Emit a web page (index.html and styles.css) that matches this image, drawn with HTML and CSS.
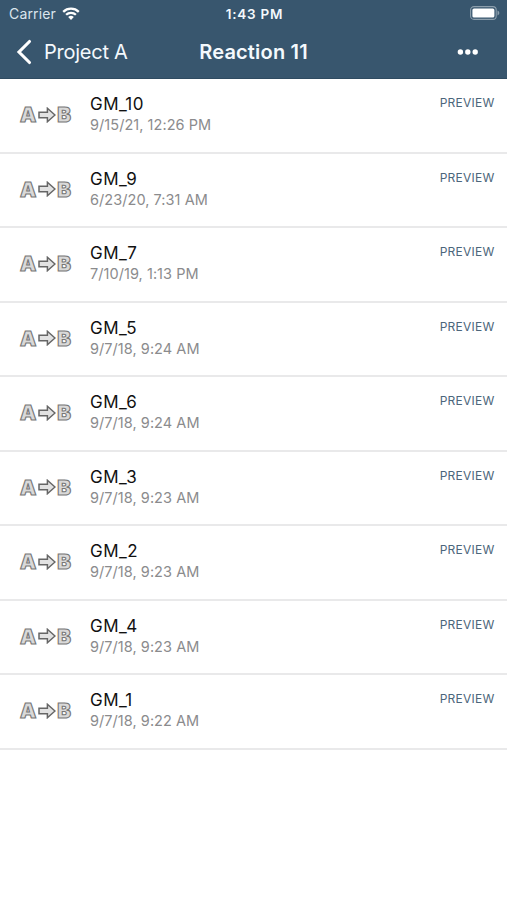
FILE: index.html
```html
<!DOCTYPE html>
<html lang="en">
<head>
<meta charset="utf-8">
<title>Reaction 11</title>
<link rel="stylesheet" href="styles.css">
</head>
<body>
<header class="header">
  <div class="status">
    <div class="carrier">
      <span>Carrier</span>
      <svg class="wifi" viewBox="0 0 18 13">
        <path d="M1.2 4.8a11.2 11.2 0 0 1 15.6 0M4.1 7.8a7 7 0 0 1 9.8 0"/>
        <path class="wifi-dot" d="M9 12.9 6.2 10a4 4 0 0 1 5.6 0z"/>
      </svg>
    </div>
    <div class="time">1:43 PM</div>
    <svg class="battery" viewBox="0 0 30 14">
      <rect class="battery-case" x=".6" y=".6" width="25.6" height="12.8" rx="3.4"/>
      <rect class="battery-level" x="2.4" y="2.4" width="22" height="9.2" rx="1.6"/>
      <path class="battery-tip" d="M27.5 4.6c2.4.8 2.4 4 0 4.8z"/>
    </svg>
  </div>
  <nav class="nav">
    <a class="back">
      <svg class="chevron" viewBox="0 0 16 26"><path d="M13.5 2.5 3 13l10.5 10.5"/></svg>
      <span>Project A</span>
    </a>
    <h1 class="title">Reaction 11</h1>
    <svg class="more" viewBox="0 0 22 6"><circle cx="3.4" cy="3" r="2.7"/><circle cx="10.8" cy="3" r="2.7"/><circle cx="18.2" cy="3" r="2.7"/></svg>
  </nav>
</header>
<main class="list">
  <div class="row"><div class="icon"><span>A</span><svg class="arrow" viewBox="0 0 18 16"><path d="M1 5.3h8.4V1.3L17 8l-7.6 6.7v-4H1z"/></svg><span>B</span></div><div class="info"><div class="name">GM_10</div><div class="date">9/15/21, 12:26 PM</div></div><a class="preview">PREVIEW</a></div>
  <div class="row"><div class="icon"><span>A</span><svg class="arrow" viewBox="0 0 18 16"><path d="M1 5.3h8.4V1.3L17 8l-7.6 6.7v-4H1z"/></svg><span>B</span></div><div class="info"><div class="name">GM_9</div><div class="date">6/23/20, 7:31 AM</div></div><a class="preview">PREVIEW</a></div>
  <div class="row"><div class="icon"><span>A</span><svg class="arrow" viewBox="0 0 18 16"><path d="M1 5.3h8.4V1.3L17 8l-7.6 6.7v-4H1z"/></svg><span>B</span></div><div class="info"><div class="name">GM_7</div><div class="date">7/10/19, 1:13 PM</div></div><a class="preview">PREVIEW</a></div>
  <div class="row"><div class="icon"><span>A</span><svg class="arrow" viewBox="0 0 18 16"><path d="M1 5.3h8.4V1.3L17 8l-7.6 6.7v-4H1z"/></svg><span>B</span></div><div class="info"><div class="name">GM_5</div><div class="date">9/7/18, 9:24 AM</div></div><a class="preview">PREVIEW</a></div>
  <div class="row"><div class="icon"><span>A</span><svg class="arrow" viewBox="0 0 18 16"><path d="M1 5.3h8.4V1.3L17 8l-7.6 6.7v-4H1z"/></svg><span>B</span></div><div class="info"><div class="name">GM_6</div><div class="date">9/7/18, 9:24 AM</div></div><a class="preview">PREVIEW</a></div>
  <div class="row"><div class="icon"><span>A</span><svg class="arrow" viewBox="0 0 18 16"><path d="M1 5.3h8.4V1.3L17 8l-7.6 6.7v-4H1z"/></svg><span>B</span></div><div class="info"><div class="name">GM_3</div><div class="date">9/7/18, 9:23 AM</div></div><a class="preview">PREVIEW</a></div>
  <div class="row"><div class="icon"><span>A</span><svg class="arrow" viewBox="0 0 18 16"><path d="M1 5.3h8.4V1.3L17 8l-7.6 6.7v-4H1z"/></svg><span>B</span></div><div class="info"><div class="name">GM_2</div><div class="date">9/7/18, 9:23 AM</div></div><a class="preview">PREVIEW</a></div>
  <div class="row"><div class="icon"><span>A</span><svg class="arrow" viewBox="0 0 18 16"><path d="M1 5.3h8.4V1.3L17 8l-7.6 6.7v-4H1z"/></svg><span>B</span></div><div class="info"><div class="name">GM_4</div><div class="date">9/7/18, 9:23 AM</div></div><a class="preview">PREVIEW</a></div>
  <div class="row"><div class="icon"><span>A</span><svg class="arrow" viewBox="0 0 18 16"><path d="M1 5.3h8.4V1.3L17 8l-7.6 6.7v-4H1z"/></svg><span>B</span></div><div class="info"><div class="name">GM_1</div><div class="date">9/7/18, 9:22 AM</div></div><a class="preview">PREVIEW</a></div>
</main>
</body>
</html>
```
FILE: styles.css
```css
* { box-sizing: border-box; }
body {
  margin: 0;
  min-height: 900px;
  background: #fff;
  font-family: Inter, "Liberation Sans", sans-serif;
  color: #111;
}
svg { display: block; flex: none; }
.header {
  height: 79px;
  background: #38566e;
  border-bottom: 1px solid #2f4b61;
  color: #f4f9fd;
}
.status {
  display: grid;
  grid-template-columns: 1fr auto 1fr;
  align-items: center;
  height: 26px;
  padding: 0 7px 0 9px;
}
.carrier {
  display: flex;
  align-items: center;
  gap: 6px;
  font-size: 14px;
  letter-spacing: .15px;
  color: #dbe5ed;
}
.wifi { width: 18px; height: 13px; fill: none; stroke: #fff; stroke-width: 2.3; }
.wifi-dot { fill: #fff; stroke: none; }
.time { padding-top: 1px; font-size: 13.5px; font-weight: 600; letter-spacing: .75px; }
.battery { width: 30px; height: 14px; justify-self: end; }
.battery-case { fill: none; stroke: #8c9eac; stroke-width: 1.1; }
.battery-level { fill: #fff; }
.battery-tip { fill: #8c9eac; }
.nav {
  display: grid;
  grid-template-columns: minmax(0, 1fr) auto minmax(0, 1fr);
  align-items: center;
  height: 52px;
  padding: 0 16px;
}
.back { display: flex; align-items: center; gap: 12px; font-size: 20px; letter-spacing: -.25px; }
.chevron { width: 16px; height: 26px; fill: none; stroke: #fff; stroke-width: 3.1; stroke-linecap: round; stroke-linejoin: miter; }
.title { margin: 0; font-size: 20px; font-weight: 600; letter-spacing: .18px; }
.more { width: 22px; height: 6px; justify-self: end; margin-right: 12px; fill: #fff; }
.row {
  display: flex;
  height: 74.55px;
  padding: 0 12.5px 0 20px;
  border-bottom: 2px solid #e9e9ea;
}
.icon {
  display: flex;
  align-items: center;
  justify-content: space-between;
  width: 51px;
  height: 22px;
  margin-top: 25px;
  font-size: 20.5px;
  font-weight: 900;
  line-height: 22px;
  color: #d9d9d9;
  -webkit-text-stroke: 1.1px #777;
}
.arrow { width: 18px; height: 16px; margin: 0 -1px 1px; fill: #e2e2e2; stroke: #666; stroke-width: 1.5; }
.info { flex: 1; padding: 15px 0 0 19px; }
.name { font-size: 17px; line-height: 21px; letter-spacing: .45px; }
.date { font-size: 14.5px; line-height: 20px; letter-spacing: .05px; color: #8b8b8d; }
.preview { margin-top: 16px; font-size: 12px; line-height: 16px; letter-spacing: .24px; color: #4c667b; }
```
